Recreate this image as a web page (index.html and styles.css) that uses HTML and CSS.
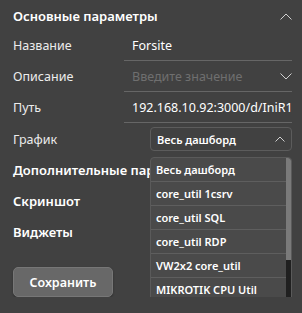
FILE: index.html
```html
<!DOCTYPE html>
<html lang="ru">
<head>
  <meta charset="UTF-8">
  <meta name="viewport" content="width=device-width, initial-scale=1.0">
  <title>Параметры</title>
  <link rel="stylesheet" href="styles.css">
</head>
<body>
  <div class="panel">
    <div class="section-head">
      <span>Основные параметры</span>
      <svg class="chev" width="12" height="7" viewBox="0 0 12 7"><polyline points="0.5,6.5 6,1 11.5,6.5" /></svg>
    </div>

    <div class="field">
      <label>Название</label>
      <div class="input">Forsite</div>
    </div>
    <div class="field">
      <label>Описание</label>
      <div class="input placeholder">
        <span>Введите значение</span>
        <svg class="chev" width="12" height="7" viewBox="0 0 12 7"><polyline points="0.5,0.5 6,6 11.5,0.5" /></svg>
      </div>
    </div>
    <div class="field">
      <label>Путь</label>
      <div class="input clip">192.168.10.92:3000/d/IniR1Tz8k/core-util</div>
    </div>
    <div class="field graph">
      <label>График</label>
      <div class="select-wrap">
        <div class="select">
          <span>Весь дашборд</span>
          <svg class="chev" width="10" height="6" viewBox="0 0 10 6"><polyline points="0.5,5.5 5,1 9.5,5.5" /></svg>
        </div>
        <div class="dropdown">
          <ul class="options">
            <li>Весь дашборд</li>
            <li>core_util 1csrv</li>
            <li>core_util SQL</li>
            <li>core_util RDP</li>
            <li>VW2x2 core_util</li>
            <li>MIKROTIK CPU Util</li>
          </ul>
          <div class="scrollbar"><div class="thumb"></div></div>
        </div>
      </div>
    </div>

    <div class="section-head collapsed">
      <span>Дополнительные параметры</span>
      <svg class="chev" width="12" height="7" viewBox="0 0 12 7"><polyline points="0.5,0.5 6,6 11.5,0.5" /></svg>
    </div>
    <div class="section-head collapsed">
      <span>Скриншот</span>
      <svg class="chev" width="12" height="7" viewBox="0 0 12 7"><polyline points="0.5,0.5 6,6 11.5,0.5" /></svg>
    </div>
    <div class="section-head collapsed">
      <span>Виджеты</span>
      <svg class="chev" width="12" height="7" viewBox="0 0 12 7"><polyline points="0.5,0.5 6,6 11.5,0.5" /></svg>
    </div>

    <button class="save">Сохранить</button>
  </div>
</body>
</html>
```

FILE: styles.css
```css
body {
  margin: 0;
  background-color: #414141;
  color: #f2f2f2;
  font-family: 'Noto Sans', 'Open Sans', sans-serif;
  font-size: 12.5px;
  overflow: hidden;
}
.panel {
  padding: 0 10px 0 13px;
}
.chev {
  fill: none;
  stroke: #d0d0d0;
  stroke-width: 1;
}
.section-head {
  display: flex;
  justify-content: space-between;
  align-items: center;
  height: 28px;
  padding-top: 2px;
  font-size: 13px;
  font-weight: 600;
  color: #ffffff;
}
.section-head.collapsed {
  height: 31px;
  padding-top: 0;
  white-space: nowrap;
}
.field {
  display: grid;
  grid-template-columns: 111px 1fr;
  align-items: center;
  height: 31px;
}
.field label {
  color: #ececec;
}
.input {
  display: flex;
  justify-content: space-between;
  align-items: center;
  height: 30px;
  padding: 0 0 0 8px;
  border-bottom: 1px solid #666666;
  color: #ffffff;
  white-space: nowrap;
  overflow: hidden;
}
.input.placeholder {
  color: #6f6f6f;
}
.field.graph {
  height: 30px;
  margin-top: 1px;
}
.select-wrap {
  position: relative;
  justify-self: end;
  width: 142px;
}
.select {
  display: flex;
  justify-content: space-between;
  align-items: center;
  height: 22px;
  padding: 0 6px;
  border: 1px solid #5c5c5c;
  border-radius: 4px;
  font-weight: 600;
  font-size: 11px;
  color: #ffffff;
}
.dropdown {
  position: absolute;
  top: 30px;
  left: 0;
  z-index: 2;
  width: 142px;
  height: 150px;
  box-sizing: border-box;
  border: 1px solid #5a5a5a;
  border-radius: 4px;
  background-color: #4a4a4a;
  overflow: hidden;
  display: flex;
}
.options {
  list-style: none;
  margin: 0;
  padding: 0;
  flex: 1;
}
.options li {
  height: 23px;
  line-height: 23px;
  padding-left: 5px;
  border-bottom: 1px solid #5e5e5e;
  font-weight: 600;
  font-size: 11px;
  color: #ffffff;
  white-space: nowrap;
}
.scrollbar {
  width: 5px;
  background-color: #202020;
}
.thumb {
  height: 102px;
  background-color: #7a7a7a;
}
.save {
  margin-top: 20px;
  width: 100px;
  height: 30px;
  border: 1px solid #777777;
  border-radius: 5px;
  background-color: #686868;
  color: #ffffff;
  font-family: inherit;
  font-size: 12.5px;
  font-weight: 600;
  box-shadow: 0 1px 2px rgba(0, 0, 0, 0.3);
}
```
